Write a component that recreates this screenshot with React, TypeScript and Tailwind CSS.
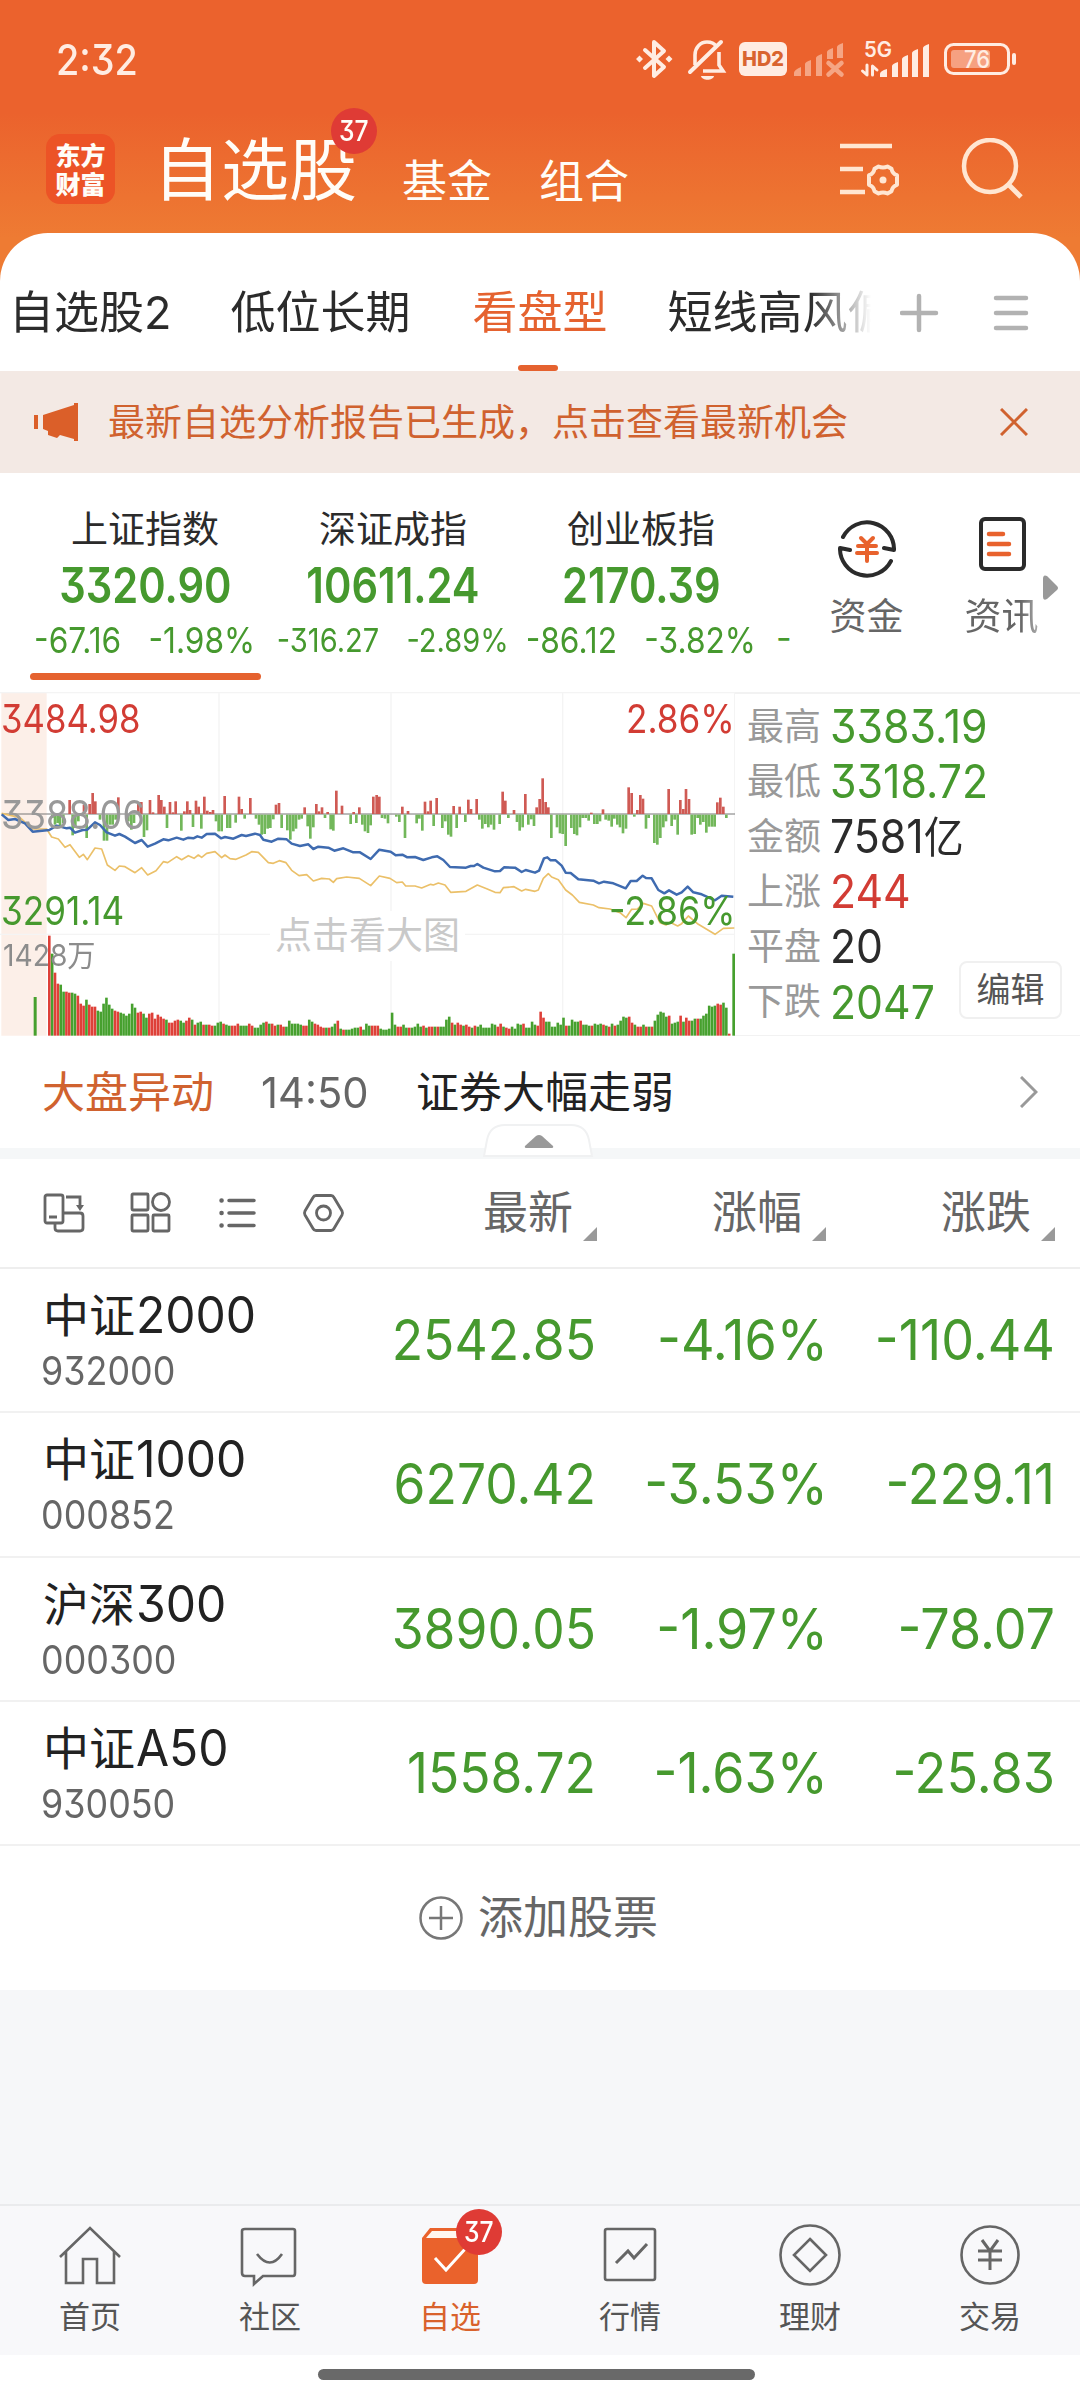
import type { ReactNode } from "react"

const sans = "font-['Inter','Noto_Sans_CJK_SC',sans-serif]"
const num = "inline-block whitespace-nowrap [font-feature-settings:'cv09']"

const tabs = [
  { label: "自选股2", left: "ml-[9px]" },
  { label: "低位长期", left: "ml-[59px]" },
  { label: "看盘型", left: "ml-[62px]", active: true },
  { label: "短线高风偏", left: "ml-[60px]" },
]

const indices = [
  { name: "上证指数", value: "3320.90", diff: "-67.16", pct: "-1.98%", size: "text-[36px]", active: true },
  { name: "深证成指", value: "10611.24", diff: "-316.27", pct: "-2.89%", size: "text-[33px]" },
  { name: "创业板指", value: "2170.39", diff: "-86.12", pct: "-3.82%", size: "text-[36px]" },
]

const stats = [
  { label: "最高", value: "3383.19", color: "text-[#46992e]" },
  { label: "最低", value: "3318.72", color: "text-[#46992e]" },
  { label: "金额", value: "7581", unit: "亿", color: "text-[#2b2b2b]" },
  { label: "上涨", value: "244", color: "text-[#d23c34]" },
  { label: "平盘", value: "20", color: "text-[#2b2b2b]" },
  { label: "下跌", value: "2047", color: "text-[#46992e]" },
]

const stocks = [
  { name: "中证", suffix: "2000", code: "932000", last: "2542.85", pct: "-4.16%", diff: "-110.44" },
  { name: "中证", suffix: "1000", code: "000852", last: "6270.42", pct: "-3.53%", diff: "-229.11" },
  { name: "沪深", suffix: "300", code: "000300", last: "3890.05", pct: "-1.97%", diff: "-78.07" },
  { name: "中证", suffix: "A50", code: "930050", last: "1558.72", pct: "-1.63%", diff: "-25.83" },
]

// one entry per traded minute: height, then r(ed) or g(reen)
const volumes =
  "100r 82g 63r 52r 51g 44g 44r 43r 43g 42g 40r 32r 30r 36g 31r 29r 29r 25g 24g 32g 38g 31g 27g 25r 24r 23g 22g 20g 22g 32g 28g 23r 24r 22g 18g 22r 23r 17r 21r 19r 17r 16g 13r 13r 15r 16r 15g 13g 15r 18r 16g 11r 13g 14g 11r 11g 11r 10r 10g 13g 14g 12r 11g 10g 10r 10r 12r 10g 10g 10g 12r 10r 8g 8g 11g 13g 14r 12g 12r 10r 11g 11r 9r 9g 15g 12g 12g 12g 11g 10r 10r 16g 14g 12r 11r 9r 8r 8g 8r 9g 12g 15r 7g 6r 6g 6g 7g 8g 8g 9r 6g 12g 10g 10r 10r 10r 7g 6g 6g 7g 23g 11g 9r 9r 11g 8g 8r 8g 9g 12g 9g 10r 8g 9r 9r 9g 9r 9g 9g 16g 19g 13r 11g 13r 11r 10g 11r 9r 8g 10r 9g 11g 8g 8g 8g 12g 11g 9r 12r 9g 8r 7r 9g 7g 12g 11g 12r 8g 8g 14g 11g 10r 24r 18r 14g 14g 9g 9g 13g 11g 18g 10r 10g 16g 14g 14g 15r 11g 11g 10g 10r 12g 11g 12g 11r 10g 9r 12g 10r 11g 15g 19g 18g 19r 13r 11g 9r 9r 11g 9r 9g 9r 15g 21g 24g 23g 19g 20r 12g 13g 14g 20r 14g 18r 15r 15g 17g 17r 17g 20g 22g 30g 29g 30g 32r 31r 33g 28g 2r"

const rises =
  "209,42 252,28 269,30 278,63 286,38 355,50 415,30 424,36 450,42 459,5 476,57 484,42 493,22 510,36 519,5 527,38 553,8 562,38 570,12 588,40 596,22 613,52 622,10 631,6 639,12 674,54 717,52 725,15 751,48 828,28 837,33 914,20 949,30 957,8 966,20 983,6 1009,70 1026,25 1061,6 1078,20 1120,52 1130,57 1138,52 1207,22 1224,9 1275,37 1284,8 1292,40 1310,48 1361,24 1379,22 1405,43 1413,15 1430,45 1508,67 1516,40 1542,12 1576,60 1610,20 1619,45 1628,107 1637,36 1645,20 1774,4 1809,14 1886,80 1895,63 1912,12 1921,57 1929,46 2006,75 2041,42 2050,15 2058,75 2067,45 2152,35 2161,49 2170,22"

const falls =
  "157,10 165,30 173,25 180,38 190,25 218,62 226,40 235,20 260,70 300,15 312,78 321,78 330,30 338,30 347,15 385,20 394,45 402,25 432,67 441,47 501,40 544,48 579,37 604,42 648,20 656,50 665,50 682,40 690,40 707,24 734,12 768,12 777,30 785,60 794,58 803,42 811,40 820,14 845,40 862,47 871,75 880,50 888,42 897,15 905,12 923,35 931,72 940,38 975,10 992,44 1000,48 1052,28 1069,25 1087,30 1095,50 1104,55 1112,32 1146,10 1155,12 1164,26 1189,6 1198,22 1215,70 1250,26 1258,12 1267,48 1301,34 1327,40 1336,20 1345,60 1353,66 1370,40 1396,22 1438,15 1447,42 1456,28 1465,38 1473,30 1482,45 1499,28 1525,10 1551,22 1559,48 1568,38 1585,30 1594,14 1602,34 1654,70 1671,38 1680,56 1688,58 1697,94 1714,40 1723,58 1731,62 1740,38 1748,10 1757,10 1766,18 1783,28 1792,28 1800,20 1817,15 1826,18 1835,36 1843,12 1852,30 1860,38 1869,56 1878,42 1903,6 1938,42 1946,10 1963,85 1972,90 1981,70 1990,38 1998,20 2015,34 2024,15 2033,60 2075,60 2084,58 2093,10 2101,30 2110,22 2119,54 2127,36 2136,36 2144,36 2179,10"

const priceLine =
  "5,388 25,405 45,402 75,415 98,440 148,435 170,422 200,430 210,428 225,443 248,435 262,434 285,412 300,420 320,442 345,452 358,447 375,455 405,474 425,465 443,485 465,476 490,463 505,466 530,458 550,464 565,458 580,460 592,454 605,458 620,447 645,446 663,460 675,456 700,461 725,450 738,453 765,446 780,450 790,464 815,470 835,461 860,463 875,476 900,483 925,478 940,492 955,485 985,488 1003,497 1030,490 1060,502 1080,502 1112,522 1138,494 1172,500 1187,511 1207,509 1222,517 1245,516 1270,525 1295,517 1312,514 1330,525 1350,546 1398,548 1412,543 1422,543 1432,537 1450,548 1485,559 1500,558 1512,547 1545,548 1565,561 1577,555 1605,563 1617,557 1632,520 1642,517 1652,526 1667,526 1685,542 1697,563 1712,564 1735,583 1780,587 1797,595 1812,590 1840,595 1877,610 1892,588 1910,588 1928,572 1938,579 1955,580 1975,615 1993,625 2007,616 2030,629 2045,622 2063,605 2080,622 2105,628 2145,646 2165,632 2200,635"

const averageLine =
  "5,385 60,398 98,432 140,432 155,456 175,462 195,487 210,479 238,517 250,508 262,524 285,489 305,492 322,540 345,556 358,543 375,545 405,563 425,548 443,570 468,557 490,530 503,533 530,515 545,524 565,512 582,520 595,510 605,517 620,505 645,500 665,518 675,510 690,521 708,523 738,510 755,500 775,502 805,533 820,535 838,527 858,533 875,556 897,572 920,569 940,588 965,580 988,582 1000,592 1010,581 1040,576 1078,580 1112,602 1138,573 1170,580 1190,593 1207,591 1217,603 1245,603 1265,609 1292,598 1300,600 1315,594 1335,600 1352,622 1398,619 1432,600 1460,611 1485,622 1500,623 1510,608 1542,605 1565,618 1577,613 1605,619 1615,615 1630,580 1645,566 1655,576 1675,584 1697,615 1717,630 1738,652 1780,660 1797,668 1830,672 1860,683 1878,698 1895,673 1912,672 1930,655 1955,663 1980,713 1998,720 2010,712 2033,723 2045,716 2065,693 2095,718 2145,748 2170,730 2203,729"

const pairs = (s: string) => s.split(" ").map((p) => p.split(",").map(Number))

function StatusBar() {
  return (
    <div className="flex h-[118px] items-center pl-[56px] pr-[62px] text-[#ffece2]">
      <span className={`${num} origin-left scale-x-[0.9] text-[42px] font-medium`}>2:32</span>
      <svg className="ml-auto" width="384" height="48" viewBox="0 0 384 48" fill="none" stroke="currentColor">
        {/* bluetooth */}
        <g transform="translate(2 0)">
          <path d="M9 15 28 32 18 41V7l10 9L9 33" strokeWidth="4" strokeLinejoin="round" strokeLinecap="round" />
          <path d="M3.500 20.500 7 24l-3.500 3.500L0 24zM33 20.500l3.500 3.500-3.500 3.500-3.500-3.500z" fill="currentColor" stroke="none" />
        </g>
        {/* muted bell */}
        <path d="M61 30V20c0-7 5-13 12-13 4 0 7 1 9 4M85 17v13l4 6H69" strokeWidth="3.600" />
        <path d="M56 37 87 7" strokeWidth="4" strokeLinecap="round" />
        <path d="M67 41h13c-1 5-12 5-13 0z" fill="currentColor" stroke="none" />
        {/* volte badge */}
        <rect x="105" y="7" width="48" height="34" rx="6" fill="currentColor" stroke="none" />
        <text x="129" y="31" textAnchor="middle" fontSize="20.500" fontWeight="800" fill="#d9642f" stroke="none" textLength="42" lengthAdjust="spacingAndGlyphs">HD2</text>
        {/* first sim, no service */}
        <path d="M160 41v-3q0-3 7-6v9zM171 41V29q0-2 6-4v16zM182 41V23q0-2 6-4v22zM193 24v-7q0-2 6-4v11zM203 23V12q0-2 6-4v15z" fill="#f5a584" stroke="none" />
        <path d="m194.500 28 13 11.500m0-11.500-13 11.500" stroke="#f5a584" strokeWidth="4.500" strokeLinecap="round" />
        {/* second sim */}
        <text x="230" y="22" fontSize="21" fontWeight="600" fill="currentColor" stroke="none" textLength="28" lengthAdjust="spacingAndGlyphs">5G</text>
        <path d="M233 30v10l-4.500-4M238.500 40V31l4.500 4" strokeWidth="3" strokeLinecap="round" strokeLinejoin="round" />
        <path fill="currentColor" stroke="none" d="M246 42v-3q0-3 7-5v8zM258 42V31q0-2 6-4v15zM268 42V24q0-2 6-4v22zM278 42V18q0-2 6-4v28zM289 42V13q0-2 6-4v33z" />
        {/* battery */}
        <rect x="311.500" y="9.500" width="63" height="29" rx="8" strokeWidth="3" />
        <rect x="317" y="15" width="39" height="18" rx="3" fill="#f6a181" stroke="none" />
        <path d="M380 20v8" strokeWidth="4" strokeLinecap="round" />
        <text x="343" y="33" textAnchor="middle" fontSize="24" fontWeight="500" fill="currentColor" stroke="none" textLength="26" lengthAdjust="spacingAndGlyphs">76</text>
      </svg>
    </div>
  )
}

function Header() {
  return (
    <header className="bg-[linear-gradient(#eb622d_40%,#ee7b33_85%)] pb-12">
      <StatusBar />
      <div className="flex h-[115px] pl-[46px] pr-[54px] text-[#fffdf8]">
        <div className="mt-[16px] flex h-[70px] w-[69px] flex-col items-center justify-center rounded-[14px] bg-[#ec5326] font-['Noto_Sans_CJK_SC'] text-[25px] font-black leading-[29px]">
          <span>东方</span>
          <span>财富</span>
        </div>
        <div className="relative ml-[38px] mt-[17px] w-[202px]">
          <h1 className="whitespace-nowrap text-[68px] leading-[70px]">自选股</h1>
          <span className="absolute left-[178px] -top-[27px] grid size-[46px] place-items-center rounded-full bg-[#df3b35]">
            <span className={`${num} scale-x-[0.88] text-[28px] font-medium leading-none`}>37</span>
          </span>
        </div>
        <span className="ml-[47px] mt-[34px] text-[45px] leading-[60px]">基金</span>
        <span className="ml-[47px] mt-[34px] text-[45px] leading-[60px]">组合</span>
        <svg className="ml-auto mt-[20px]" width="186" height="70" viewBox="0 0 186 70" fill="none" stroke="#ffe6d2" strokeWidth="4.500">
          <path d="M0 8h52M0 31h23M0 54h25" />
          <path d="M38.500 28.500q4.500 2 9 0l4 2.200q.8 5 5.500 6.500v9.600q-4.700 1.500-5.500 6.500l-4 2.200q-4.500-2-9 0l-4-2.200q-.8-5-5.500-6.500v-9.600q4.700-1.500 5.500-6.500z" strokeWidth="4" strokeLinejoin="round" />
          <circle cx="43" cy="42" r="3.500" fill="#ffe6d2" stroke="none" />
          <circle cx="150" cy="28" r="26" />
          <path d="m168 46 13 13" strokeWidth="5" />
        </svg>
      </div>
    </header>
  )
}

function GroupTabs() {
  return (
    <div className="-mt-12 flex h-[138px] items-center rounded-t-[48px] bg-white">
      <div className="flex w-[871px] overflow-hidden whitespace-nowrap pt-[22px] text-[45px] leading-[116px] text-[#2b2b2b] [mask-image:linear-gradient(to_right,#000_93%,transparent)]">
        {tabs.map((t) => (
          <div key={t.label} className={`relative shrink-0 ${t.left} ${t.active ? "text-[#e5622f]" : ""}`}>
            {t.label}
            {t.active && <i className="absolute bottom-0 left-[46px] h-[6px] w-[40px] rounded-full bg-[#e5622f]" />}
          </div>
        ))}
      </div>
      <svg className="ml-[29px] mt-[22px]" width="130" height="40" viewBox="0 0 130 40" stroke="#b2b2b2" strokeWidth="4.500" strokeLinecap="round">
        <path d="M2 20h34M19 3v34M96 5h30M96 20h30M96 35h30" />
      </svg>
    </div>
  )
}

function Notice() {
  return (
    <div className="flex h-[102px] items-center bg-[#f3e9e4] pl-[34px] pr-[52px] text-[#d0622f]">
      <svg width="44" height="38" viewBox="0 0 44 38" fill="#db5f29">
        <path d="M0 12h4v14H0zM9 12 40 2V0h4v38h-4v-2l-14-4-3 3-9-3v-4l-5-2z" />
      </svg>
      <span className="ml-[30px] mt-[2px] text-[37px]">最新自选分析报告已生成，点击查看最新机会</span>
      <svg className="ml-auto" width="28" height="28" viewBox="0 0 28 28" stroke="currentColor" strokeWidth="3">
        <path d="m1 1 26 26M27 1 1 27" />
      </svg>
    </div>
  )
}

function IndexStrip() {
  return (
    <section className="flex h-[219px] bg-white pl-[21px]">
      {indices.map((i) => (
        <div key={i.name} className="flex w-[248px] shrink-0 flex-col items-center">
          <span className="mt-[32px] text-[37px] leading-[50px] text-[#2b2b2b]">{i.name}</span>
          <span className={`${num} scale-x-[0.85] text-[49px] font-semibold leading-[61px] text-[#46992e]`}>{i.value}</span>
          <span className={`flex scale-x-[0.88] gap-[31px] whitespace-nowrap leading-[48px] text-[#46992e] [font-feature-settings:'cv09'] ${i.size}`}>
            <span>{i.diff}</span>
            <span>{i.pct}</span>
          </span>
          {i.active && <i className="mt-[9px] h-[7px] w-[231px] rounded-full bg-[#e5622f]" />}
        </div>
      ))}
      <span className="mt-[141px] w-[25px] pl-[11px] text-[34px] leading-[48px] text-[#46992e]">-</span>
      <div className="ml-[19px] flex w-[115px] flex-col items-center text-[37px] text-[#666]">
        <svg className="mt-[46px]" width="58" height="60" viewBox="0 0 58 60" fill="none" stroke="#2b2b2b" strokeWidth="4" strokeLinecap="round" strokeLinejoin="round">
          <path d="M5 18a27 27 0 0 1 51 13l-10-2M53 42A27 27 0 0 1 2 29l10 2" />
          <path d="m23 19 6 6 6-6M20 27h18M19 34h20M29 26v16" stroke="#e8622d" />
        </svg>
        <span className="mt-[11px] leading-[54px]">资金</span>
      </div>
      <div className="ml-[20px] flex w-[115px] flex-col items-center text-[37px] text-[#666]">
        <svg className="mt-[40px]" width="48" height="60" viewBox="0 0 48 60" fill="none" stroke="#2b2b2b" strokeWidth="4" strokeLinecap="round">
          <rect x="3" y="6" width="43" height="50" rx="4" />
          <path d="M11 21h14M11 31h20M11 41h20" stroke="#e8622d" strokeWidth="4.500" />
        </svg>
        <span className="mt-[17px] leading-[54px] [mask-image:linear-gradient(to_right,#000_75%,#0008)]">资讯</span>
      </div>
      <svg className="-ml-[16px] mt-[102px]" width="15" height="26" viewBox="0 0 15 26" fill="#999">
        <path d="M0 4q0-5 4-3l10 10q2 2 0 4L4 24q-4 2-4-2z" />
      </svg>
    </section>
  )
}

function Chart() {
  return (
    <div className="relative w-[735px] shrink-0 overflow-hidden">
      <svg width="735" height="344" viewBox="0 21 2205 1032" fill="none">
        <path d="M4 21h136v1031H4z" fill="#fcefe8" />
        <path d="M0 23h2205M0 748h2205M657 21v1031M1173 21v1031M1688 21v1031M2204 21v1031" stroke="#f4f4f4" strokeWidth="4" />
        <path d="M5 387h2200" stroke="#777" strokeWidth="3" />
        {pairs(rises).map(([x, h]) => (
          <rect key={x} x={x - 4} y={387 - h} width="8" height={h} fill="#cf5a54" />
        ))}
        {pairs(falls).map(([x, h]) => (
          <rect key={x} x={x - 4} y={389} width="8" height={h} fill="#72b75a" />
        ))}
        <rect x="101" y="936" width="9" height="116" fill="#46a02e" />
        {volumes.split(" ").map((v, i) => {
          const h = parseInt(v) * 3
          return <rect key={i} x={144 + i * 8.57} y={1052 - h} width="7.800" height={h} fill={v.endsWith("r") ? "#de4038" : "#46a02e"} />
        })}
        <rect x="2197" y="806" width="8" height="246" fill="#46a02e" />
        <polyline points={averageLine} stroke="#ebc069" strokeWidth="5" strokeLinejoin="round" />
        <polyline points={priceLine} stroke="#3f6bb0" strokeWidth="7.500" strokeLinejoin="round" />
      </svg>
      <ChartLabel className="left-[1px] top-[5px] origin-left scale-x-[0.89] text-[#d23c34]">3484.98</ChartLabel>
      <ChartLabel className="right-0 top-[5px] origin-right scale-x-[0.9] text-[#d23c34]">2.86%</ChartLabel>
      <ChartLabel className="left-[1px] top-[101px] origin-left scale-x-[0.93] text-[#999]">3388.06</ChartLabel>
      <ChartLabel className="left-[1px] top-[197px] origin-left scale-x-[0.9] text-[#46992e]">3291.14</ChartLabel>
      <ChartLabel className="right-0 top-[197px] origin-right scale-x-[0.92] text-[#46992e]">-2.86%</ChartLabel>
      <span className="absolute left-[3px] top-[243px] origin-left scale-x-[0.94] text-[30px] leading-[40px] text-[#8c8c8c]">1428万</span>
      <span className="absolute left-[270px] top-[219px] bg-white px-[5px] text-[37px] leading-[50px] text-[#c9c9c9]">点击看大图</span>
    </div>
  )
}

function ChartLabel({ className, children }: { className: string; children: ReactNode }) {
  return <span className={`${num} absolute text-[39px] leading-[44px] ${className}`}>{children}</span>
}

function Stats() {
  return (
    <div className="relative flex flex-1 flex-col border-t-2 border-b border-[#f2f2f2] pl-[12px] pt-[5px]">
      {stats.map((s) => (
        <div key={s.label} className="flex h-[55.100px] items-center">
          <span className="w-[83px] text-[37px] text-[#999]">{s.label}</span>
          <span className={`${num} origin-left scale-x-[0.93] text-[46px] ${s.color}`}>
            {s.value}
            {s.unit && <span className="text-[43px]">{s.unit}</span>}
          </span>
        </div>
      ))}
      <button className="absolute right-[18px] bottom-[16px] h-[58px] w-[103px] rounded-lg border-2 border-[#f0f0f0] text-[34px] leading-[50px] text-[#555]">
        编辑
      </button>
    </div>
  )
}

function MarketAlert() {
  return (
    <div className="relative flex h-[123px] items-center border-b-[11px] border-[#f5f7f8] bg-white pl-[42px] pr-[42px] text-[43px]">
      <span className="text-[#d0622f]">大盘异动</span>
      <span className={`${num} ml-[47px] w-[107px] origin-left scale-x-[0.97] text-[#666]`}>14:50</span>
      <span className="ml-[48px] text-[#222]">证券大幅走弱</span>
      <svg className="ml-auto" width="18" height="32" viewBox="0 0 18 32" fill="none" stroke="#999" strokeWidth="3">
        <path d="m1 1 15 15L1 31" />
      </svg>
      <svg className="absolute left-[483px] top-[88px]" width="112" height="34" viewBox="0 0 112 34">
        <path d="M1 32 4 16Q7 1 22 1h66q15 0 18 15l3 16z" fill="#fff" stroke="#f0f1f2" strokeWidth="2" />
        <path d="M53 12q3-2 6 0l11 10q1 2-2 2H44q-3 0-2-2z" fill="#999" />
      </svg>
    </div>
  )
}

function Column({ width, children }: { width: string; children: ReactNode }) {
  return (
    <div className={`flex items-center justify-end ${width}`}>
      {children}
      <svg className="ml-[10px] mt-[42px]" width="14" height="14" viewBox="0 0 14 14" fill="#999">
        <path d="M14 0v14H0z" />
      </svg>
    </div>
  )
}

function StockTable() {
  return (
    <section className="bg-white">
      <div className="flex h-[110px] items-center border-b-2 border-[#eee] text-[45px] text-[#666]">
        <svg className="ml-[42px]" width="304" height="44" viewBox="0 0 304 44" fill="none" stroke="#666" strokeWidth="2.800">
          {/* rotate */}
          <rect x="3" y="4" width="18" height="28" rx="2" />
          <path d="M7 26h8M24 6h14v10M21 22h17q3 0 3 3v12q0 3-3 3H16q-3 0-3-3v-5" />
          <path d="M34 14h8l-4 6z" fill="#666" stroke="none" />
          {/* blocks */}
          <rect x="90" y="3" width="16" height="16" rx="1" />
          <circle cx="119" cy="11" r="8.500" />
          <rect x="90" y="24" width="16" height="16" rx="1" />
          <rect x="111" y="24" width="16" height="16" rx="1" />
          {/* list */}
          <path d="M187 9.500h25M187 22h25M187 34.500h25" strokeWidth="3.500" strokeLinecap="round" />
          <path d="M179.500 9.500h.1M179.500 22h.1M179.500 34.500h.1" strokeWidth="4.500" strokeLinecap="round" />
          {/* settings */}
          <path d="M274 4.500h15q2 0 3 2l8 13.500q1 2 0 4l-8 13.500q-1 2-3 2h-15q-2 0-3-2L263 24q-1-2 0-4l8-13.500q1-2 3-2z" />
          <circle cx="281.500" cy="22" r="7" />
        </svg>
        <Column width="w-[251px]">最新</Column>
        <Column width="w-[229px]">涨幅</Column>
        <Column width="w-[229px]">涨跌</Column>
      </div>
      {stocks.map((s) => (
        <div key={s.code} className="flex h-[144.300px] items-center border-b-2 border-[#f1f1f1] text-[56px] text-[#46992e]">
          <div className="flex w-[300px] flex-col pl-[43px] pt-[6px]">
            <span className="flex items-center text-[46px] leading-[56px] text-[#222]">
              {s.name}
              <span className={`${num} ml-[1px] origin-left scale-x-[0.96] text-[50px]`}>{s.suffix}</span>
            </span>
            <span className={`${num} -ml-[2px] origin-left scale-x-[0.92] text-[39px] leading-[56px] text-[#666]`}>{s.code}</span>
          </div>
          <span className={`${num} w-[296px] origin-right scale-x-[0.92] text-right`}>{s.last}</span>
          <span className={`${num} w-[232px] origin-right scale-x-[0.93] text-right`}>{s.pct}</span>
          <span className={`${num} w-[227px] origin-right scale-x-[0.93] text-right`}>{s.diff}</span>
        </div>
      ))}
      <div className="flex h-[144px] items-center justify-center gap-[15px] pr-[3px] text-[45px] text-[#666]">
        <svg width="44" height="44" viewBox="0 0 44 44" fill="none" stroke="#777" strokeWidth="2.500">
          <circle cx="22" cy="22" r="20.500" />
          <path d="M10 22h24M22 10v24" />
        </svg>
        添加股票
      </div>
    </section>
  )
}

const navItems = [
  {
    label: "首页",
    icon: <path d="M2 34 32 5l30 29M8 29v31h17V36h14v24h17V29" />,
  },
  {
    label: "社区",
    icon: <path d="M7 6h48q2 0 2 2v42q0 3-2 3H25l-9 8v-8H7q-3 0-3-3V8q0-2 3-2zM19 31q13 17 25 0" />,
  },
  {
    label: "自选",
    icon: (
      <>
        <path d="M4 15 12 5h40l8 10v42q0 4-4 4H8q-4 0-4-4z" fill="#ea622c" stroke="none" />
        <path d="M8 15 14 8h36l6 7z" fill="#fff6f0" stroke="none" />
        <path d="m17 35 11 12 20-22" stroke="#fff" strokeWidth="3" />
      </>
    ),
  },
  {
    label: "行情",
    icon: (
      <>
        <rect x="7" y="6" width="50" height="51" rx="2" />
        <path d="m18 40 12-12 6 7 13-14" strokeWidth="3" />
      </>
    ),
  },
  {
    label: "理财",
    icon: (
      <>
        <circle cx="32" cy="32" r="29.500" />
        <path d="m32 16 16 16-16 16-16-16z" />
      </>
    ),
  },
  {
    label: "交易",
    icon: (
      <>
        <circle cx="32" cy="32" r="28.500" />
        <path d="m24 17 8 11 8-11M20 28h24M20 37h24M32 28v19" strokeWidth="3" />
      </>
    ),
  },
]

function BottomNav() {
  return (
    <nav className="grid h-[151px] grid-cols-6 border-t-2 border-[#eaebed] bg-[#f8f8fa] text-[31px] text-[#555]">
      {navItems.map((n, i) => (
        <div key={n.label} className={`relative flex flex-col items-center ${i === 2 ? "text-[#d9622c]" : ""}`}>
          <svg className="mt-[17px]" width="64" height="64" viewBox="0 0 64 64" fill="none" stroke="#666" strokeWidth="2.600">
            {n.icon}
          </svg>
          <span className="mt-[7px] leading-[46px]">{n.label}</span>
          {i === 2 && (
            <span className="absolute left-[96px] top-[3px] grid size-[46px] place-items-center rounded-full bg-[#df3b35] text-white">
              <span className={`${num} scale-x-[0.88] text-[28px] font-medium leading-none`}>37</span>
            </span>
          )}
        </div>
      ))}
    </nav>
  )
}

export default function App() {
  return (
    <div className={`${sans} flex h-[2401px] w-[1080px] flex-col overflow-hidden bg-[#f6f7f9]`}>
      <Header />
      <GroupTabs />
      <Notice />
      <IndexStrip />
      <section className="flex h-[344px] bg-white">
        <Chart />
        <Stats />
      </section>
      <MarketAlert />
      <StockTable />
      <div className="flex-1" />
      <BottomNav />
      <div className="flex h-[46px] justify-center bg-white pr-[7px] pt-[14px]">
        <div className="h-[11px] w-[437px] rounded-full bg-[#696969]" />
      </div>
    </div>
  )
}
